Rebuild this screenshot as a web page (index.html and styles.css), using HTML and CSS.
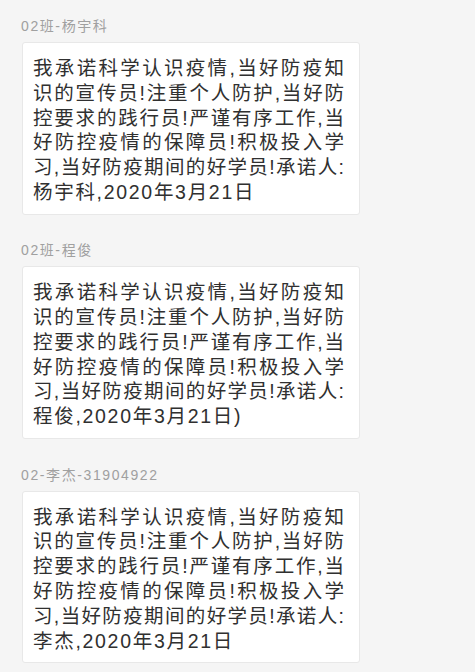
FILE: index.html
```html
<!DOCTYPE html>
<html lang="zh-CN">
<head>
<meta charset="utf-8">
<link rel="stylesheet" href="styles.css">
</head>
<body>
<div class="list">
  <div class="msg">
    <div class="name">02班-杨宇科</div>
    <div class="card">
      <p class="body">我承诺科学认识疫情,当好防疫知<br>识的宣传员!注重个人防护,当好防<br>控要求的践行员!严谨有序工作,当<br>好防控疫情的保障员!积极投入学<br>习,当好防疫期间的好学员!承诺人:</p>
      <p class="sign">杨宇科,2020年3月21日</p>
    </div>
  </div>
  <div class="msg">
    <div class="name">02班-程俊</div>
    <div class="card">
      <p class="body">我承诺科学认识疫情,当好防疫知<br>识的宣传员!注重个人防护,当好防<br>控要求的践行员!严谨有序工作,当<br>好防控疫情的保障员!积极投入学<br>习,当好防疫期间的好学员!承诺人:</p>
      <p class="sign">程俊,2020年3月21日)</p>
    </div>
  </div>
  <div class="msg">
    <div class="name">02-李杰-31904922</div>
    <div class="card">
      <p class="body">我承诺科学认识疫情,当好防疫知<br>识的宣传员!注重个人防护,当好防<br>控要求的践行员!严谨有序工作,当<br>好防控疫情的保障员!积极投入学<br>习,当好防疫期间的好学员!承诺人:</p>
      <p class="sign">李杰,2020年3月21日</p>
    </div>
  </div>
</div>
</body>
</html>
```
FILE: styles.css
```css
html, body {
  margin: 0;
  padding: 0;
  background: #f5f5f5;
}
body {
  font-family: "Liberation Sans", "Noto Sans CJK SC", sans-serif;
  height: 672px;
  overflow: hidden;
}
.list {
  display: flex;
  flex-direction: column;
  gap: 27.5px;
  padding: 18px 0 0 22px;
}
.msg {
  display: flex;
  flex-direction: column;
  gap: 7px;
}
.name {
  margin-left: -1px;
  font-size: 14px;
  letter-spacing: 1.6px;
  line-height: 17px;
  color: #a0a0a0;
}
.card {
  box-sizing: border-box;
  width: 338px;
  padding: 13px 0 9px 10px;
  background: #ffffff;
  border: 1px solid #e8e8e8;
  border-radius: 3px;
  font-size: 19.5px;
  line-height: 24.8px;
  color: #303030;
  white-space: nowrap;
}
.body,
.sign {
  margin: 0;
}
.body {
  width: 311px;
  text-align: justify;
  text-align-last: justify;
}
.sign {
  letter-spacing: 1.7px;
}
```
